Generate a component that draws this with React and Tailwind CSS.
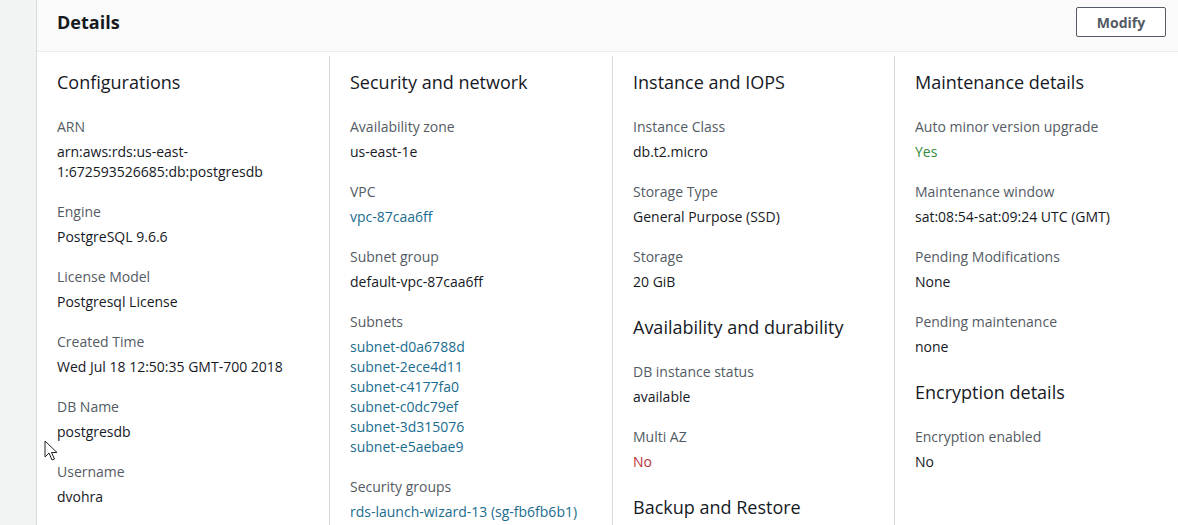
import React from "react";

const columns = [
  {
    sections: [
      {
        title: "Configurations",
        items: [
          { label: "ARN", value: "arn:aws:rds:us-east-1:672593526685:db:postgresdb" },
          { label: "Engine", value: "PostgreSQL 9.6.6" },
          { label: "License Model", value: "Postgresql License" },
          { label: "Created Time", value: "Wed Jul 18 12:50:35 GMT-700 2018" },
          { label: "DB Name", value: "postgresdb" },
          { label: "Username", value: "dvohra" },
        ],
      },
    ],
  },
  {
    sections: [
      {
        title: "Security and network",
        items: [
          { label: "Availability zone", value: "us-east-1e" },
          { label: "VPC", value: "vpc-87caa6ff", link: true },
          { label: "Subnet group", value: "default-vpc-87caa6ff" },
          {
            label: "Subnets",
            link: true,
            lines: [
              "subnet-d0a6788d",
              "subnet-2ece4d11",
              "subnet-c4177fa0",
              "subnet-c0dc79ef",
              "subnet-3d315076",
              "subnet-e5aebae9",
            ],
          },
          { label: "Security groups", value: "rds-launch-wizard-13 (sg-fb6fb6b1)", link: true },
        ],
      },
    ],
  },
  {
    sections: [
      {
        title: "Instance and IOPS",
        items: [
          { label: "Instance Class", value: "db.t2.micro" },
          { label: "Storage Type", value: "General Purpose (SSD)" },
          { label: "Storage", value: "20 GiB" },
        ],
      },
      {
        title: "Availability and durability",
        items: [
          { label: "DB instance status", value: "available" },
          { label: "Multi AZ", value: "No", tone: "bad" },
        ],
      },
      { title: "Backup and Restore", items: [] },
    ],
  },
  {
    sections: [
      {
        title: "Maintenance details",
        items: [
          { label: "Auto minor version upgrade", value: "Yes", tone: "good" },
          { label: "Maintenance window", value: "sat:08:54-sat:09:24 UTC (GMT)" },
          { label: "Pending Modifications", value: "None" },
          { label: "Pending maintenance", value: "none" },
        ],
      },
      {
        title: "Encryption details",
        items: [{ label: "Encryption enabled", value: "No" }],
      },
    ],
  },
];

function valueColor(item) {
  if (item.link) return "text-[#1b6c8e]";
  if (item.tone === "good") return "text-[#2f8a3c]";
  if (item.tone === "bad") return "text-[#b8323a]";
  return "text-[#16191f]";
}

function Item({ item }) {
  return (
    <div className="mb-[20px]">
      <div className="text-[14px] leading-[20px] text-[#545b64]">{item.label}</div>
      <div className={`mt-[5px] text-[14px] leading-[20px] ${valueColor(item)}`}>
        {item.lines ? item.lines.map((l) => <div key={l}>{l}</div>) : item.value}
      </div>
    </div>
  );
}

function Cursor() {
  return (
    <svg
      className="absolute left-[44px] top-[440px]"
      width="14"
      height="22"
      viewBox="0 0 14 22"
    >
      <path
        d="M1 1 L1 17 L5 13 L8 20 L10.5 19 L7.5 12.5 L13 12.5 Z"
        fill="#fff"
        stroke="#222"
        strokeWidth="1"
        strokeLinejoin="round"
      />
    </svg>
  );
}

export default function App() {
  return (
    <div
      className="relative flex h-[525px] w-[1178px] overflow-hidden bg-[#f2f3f3]"
      style={{ fontFamily: '"Open Sans", "Noto Sans", sans-serif' }}
    >
      <div className="w-[36px] shrink-0" />
      <div className="flex-1 border-l border-[#d5dbdb] bg-white">
        <div className="flex h-[52px] items-start justify-between border-b border-[#eaeded] bg-[#fafafa] pl-[20px] pr-[12px]">
          <h2 className="mt-[10px] text-[18px] font-bold leading-[24px] text-[#16191f]">Details</h2>
          <button className="mt-[7px] h-[30px] w-[90px] rounded-[2px] border border-[#545b64] bg-white text-[14px] font-bold text-[#545b64]">
            Modify
          </button>
        </div>
        <div className="grid grid-cols-[292px_283px_282px_1fr] pt-[4px]">
          {columns.map((col, i) => (
            <div
              key={i}
              className={`h-[470px] pl-[20px] pr-[10px] pt-[14px] ${i > 0 ? "border-l border-[#d5dbdb]" : ""}`}
            >
              {col.sections.map((s, j) => (
                <div key={s.title} className={j > 0 ? "pt-[3px]" : ""}>
                  <h3 className="mb-[23px] text-[18px] leading-[24px] text-[#16191f]">{s.title}</h3>
                  {s.items.map((it) => (
                    <Item key={it.label} item={it} />
                  ))}
                </div>
              ))}
            </div>
          ))}
        </div>
      </div>
      <Cursor />
    </div>
  );
}
